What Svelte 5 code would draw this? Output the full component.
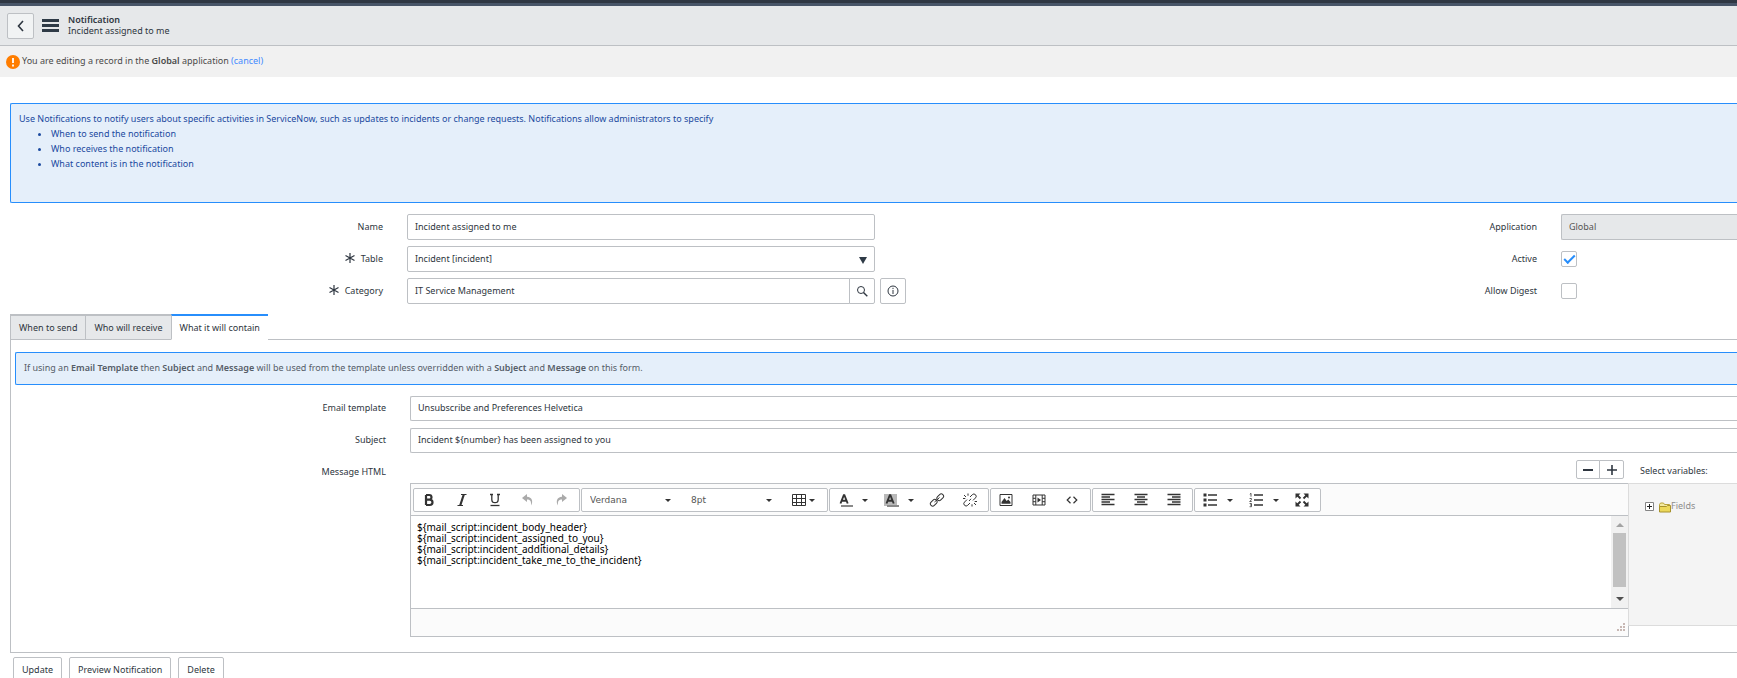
<script lang="ts">
  let name = $state("Incident assigned to me");
  let table = $state("Incident [incident]");
  let category = $state("IT Service Management");
  let active = $state(true);
  let allowDigest = $state(false);
  let template = $state("Unsubscribe and Preferences Helvetica");
  let subject = $state("Incident ${number} has been assigned to you");
  let message = $state(
    [
      "${mail_script:incident_body_header}",
      "${mail_script:incident_assigned_to_you}",
      "${mail_script:incident_additional_details}",
      "${mail_script:incident_take_me_to_the_incident}",
    ].join("\n")
  );

  const tabs = ["When to send", "Who will receive", "What it will contain"];
  let activeTab = $state(2);

  // Toolbar groups that come after the font controls.
  const groups = [
    [
      { icon: "color", label: "Text color", menu: true },
      { icon: "highlight", label: "Background color", menu: true },
      { icon: "link", label: "Insert link" },
      { icon: "unlink", label: "Remove link" },
    ],
    [
      { icon: "image", label: "Insert image" },
      { icon: "video", label: "Insert video" },
      { icon: "code", label: "Source code" },
    ],
    [
      { icon: "left", label: "Align left" },
      { icon: "center", label: "Align center" },
      { icon: "right", label: "Align right" },
    ],
    [
      { icon: "bullets", label: "Bullet list", menu: true },
      { icon: "numbers", label: "Numbered list", menu: true },
      { icon: "full", label: "Fullscreen" },
    ],
  ];
</script>

{#snippet icon(kind: string)}
  <svg class="icon" viewBox="0 0 16 16" width="16" height="16" fill="none" stroke="currentColor" aria-hidden="true">
    {#if kind === "bold"}
      <path d="M5 3v10M5 3h3.200a2.200 2.200 0 0 1 0 4.600H5M5 7.600h3.800a2.600 2.600 0 0 1 0 5.400H5" stroke-width="2.200" />
    {:else if kind === "italic"}
      <path d="M7 2.500h5.500M3.500 13.500H9" stroke-width="1" />
      <path d="M9.800 2.500 6.200 13.500" stroke-width="2.200" />
    {:else if kind === "underline"}
      <path d="M4.800 2v5.500a3.200 3.200 0 0 0 6.400 0V2M3 2.500h3M10 2.500h3" stroke-width="1.300" />
      <path d="M3.500 13.500h9" stroke-width="1.300" />
    {:else if kind === "undo"}
      <path d="M7 2 2 6l5 4V7.500c3 0 4.500 1.500 4 6 2.500-4 1-8.500-4-8.800z" fill="currentColor" stroke="none" />
    {:else if kind === "redo"}
      <path d="M9 2l5 4-5 4V7.500c-3 0-4.500 1.500-4 6-2.500-4-1-8.500 4-8.800z" fill="currentColor" stroke="none" />
    {:else if kind === "table"}
      <path d="M1.500 2.500h13v11h-13zM1.500 6.500h13M1.500 10.500h13M5.500 2.500v11M10.500 2.500v11" />
    {:else if kind === "color" || kind === "highlight"}
      {#if kind === "highlight"}<path d="M1 2h13v12H1z" fill="#b9b9b9" stroke="none" />{/if}
      <path d="m3.500 11.500 3.300-8.300h.6l3.300 8.300M4.800 8.700h4.600" stroke-width="1.900" />
      <path d="M4 14h12" stroke="#8a8a8a" stroke-width="2" />
    {:else if kind === "link"}
      <rect x="7.500" y="3" width="7.500" height="4.600" rx="2.300" transform="rotate(-45 11.200 5.300)" />
      <rect x="1" y="8.500" width="7.500" height="4.600" rx="2.300" transform="rotate(-45 4.700 10.800)" />
      <path d="m5.500 10 5-4.500" />
    {:else if kind === "unlink"}
      <path d="m8 5 2.300-2.300a2.200 2.200 0 0 1 3.200 3.200L11 8.400M8 11l-2.300 2.300a2.200 2.200 0 0 1-3.200-3.200L5 7.600M9 6.800 7 9M6 1.500v2.200M2 3l2 2M1 6.500h2.300M10 14.500v-2.200M14 13l-2-2M15 9.500h-2.300" />
    {:else if kind === "image"}
      <path d="M2 2.500h12v11H2z" />
      <path d="M3.500 11.800V10l3-4 2.200 3 1.600-1.500 2.200 2.500v1.800z" fill="currentColor" stroke="none" />
      <circle cx="11" cy="5.500" r="1" fill="currentColor" stroke="none" />
    {:else if kind === "video"}
      <path d="M2 3h12v10H2zM4.800 3v10M11.200 3v10M2 6.300h2.800M2 9.700h2.800M11.200 6.300H14M11.200 9.700H14" />
      <path d="m6.500 5.500 3.500 2.500-3.500 2.500z" fill="currentColor" stroke="none" />
    {:else if kind === "code"}
      <path d="M6.500 4.800 3.200 8l3.300 3.200M9.500 4.800 12.800 8l-3.300 3.200" stroke-width="1.200" />
    {:else if kind === "left"}
      <path d="M1.500 2.500h13M1.500 5h8.500M1.500 7.500h13M1.500 10h8.500M1.500 12.500h13" stroke-width="1.500" />
    {:else if kind === "center"}
      <path d="M1.500 2.500h13M4 5h8M1.500 7.500h13M4 10h8M1.500 12.500h13" stroke-width="1.500" />
    {:else if kind === "right"}
      <path d="M1.500 2.500h13M6 5h8.500M1.500 7.500h13M6 10h8.500M1.500 12.500h13" stroke-width="1.500" />
    {:else if kind === "bullets"}
      <path d="M6 3h9M6 8h9M6 13h9" stroke-width="1.300" />
      <path d="M1.500 3h3M1.500 8h3M1.500 13h3" stroke-width="3" />
    {:else if kind === "numbers"}
      <path d="M6 3h9M6 8h9M6 13h9" stroke-width="1.300" />
      <path d="M1.800 2.300 3 1.300v3.400M1.600 6.500h1.800v1.300L1.700 9.500h2M1.600 11.500h1.900v3.200H1.600M2 13h1.500" stroke-width=".8" />
    {:else if kind === "full"}
      <path d="M1.500 1.500h5l-5 5zM14.500 1.500v5l-5-5zM1.500 14.500v-5l5 5zM14.500 14.500h-5l5-5z" fill="currentColor" stroke="none" />
      <path d="m3 3 3.500 3.500M13 3 9.500 6.500M3 13l3.500-3.500M13 13 9.500 9.500" stroke-width="1.900" />
    {:else if kind === "back"}
      <path d="M10 3 5.500 8l4.500 5" stroke-width="1.600" />
    {:else if kind === "search"}
      <circle cx="7" cy="7" r="3.500" />
      <path d="m9.500 9.500 3.800 3.800" stroke-width="1.400" />
    {:else if kind === "info"}
      <circle cx="8" cy="8" r="5" />
      <path d="M8 7v4M8 4.800v1.300" />
    {:else if kind === "required"}
      <path d="M8 3v10M3.500 5.500l9 5M12.500 5.500l-9 5" stroke-width="1.200" />
    {:else if kind === "minus"}
      <path d="M3 8h10" stroke-width="2" />
    {:else if kind === "plus"}
      <path d="M3 8h10M8 3v10" stroke-width="1.600" />
    {/if}
  </svg>
{/snippet}

{#snippet tool(kind: string, label: string, menu = false)}
  <button class="tool" class:menu aria-label={label}>
    {@render icon(kind)}
    {#if menu}<i class="caret"></i>{/if}
  </button>
{/snippet}

<div class="topbar"></div>

<header>
  <button class="back" aria-label="Back">{@render icon("back")}</button>
  <button class="burger" aria-label="Form menu"><i></i><i></i><i></i></button>
  <h1><strong>Notification</strong><span>{name}</span></h1>
</header>

<div class="scope">
  <svg viewBox="0 0 14 14" width="14" height="14" aria-hidden="true">
    <circle cx="7" cy="7" r="7" fill="#ff7d00" />
    <path d="M7 3v5M7 9.500v2" stroke="#fff" stroke-width="1.800" />
  </svg>
  <p>You are editing a record in the <strong>Global</strong> application <a href="#cancel">(cancel)</a></p>
</div>

<main>
  <section class="intro">
    <p>Use Notifications to notify users about specific activities in ServiceNow, such as updates to incidents or change requests. Notifications allow administrators to specify</p>
    <ul>
      <li>When to send the notification</li>
      <li>Who receives the notification</li>
      <li>What content is in the notification</li>
    </ul>
  </section>

  <form class="record" onsubmit={(e) => e.preventDefault()}>
    <label for="name">Name</label>
    <div class="field"><input id="name" type="text" bind:value={name} /></div>
    <label for="application">Application</label>
    <input id="application" class="readonly" type="text" value="Global" readonly />

    <label for="table">{@render icon("required")}Table</label>
    <div class="field">
      <div class="picker">
        <select id="table" bind:value={table}>
          <option>Incident [incident]</option>
        </select>
      </div>
    </div>
    <label for="active">Active</label>
    <input id="active" type="checkbox" bind:checked={active} />

    <label for="category">{@render icon("required")}Category</label>
    <div class="field">
      <input id="category" class="joined" type="text" bind:value={category} />
      <button class="lookup" type="button" aria-label="Look up category">{@render icon("search")}</button>
      <button class="info" type="button" aria-label="Preview category">{@render icon("info")}</button>
    </div>
    <label for="digest">Allow Digest</label>
    <input id="digest" type="checkbox" bind:checked={allowDigest} />
  </form>

  <div class="tabs" role="tablist">
    {#each tabs as tab, i}
      <button role="tab" class:active={i === activeTab} aria-selected={i === activeTab} onclick={() => (activeTab = i)}>{tab}</button>
    {/each}
    <span class="rest"></span>
  </div>

  <section class="panel">
    <p class="hint">
      If using an <strong>Email Template</strong> then <strong>Subject</strong> and <strong>Message</strong> will be used from the template unless overridden with a <strong>Subject</strong> and <strong>Message</strong> on this form.
    </p>

    <div class="content">
      <label for="template">Email template</label>
      <input id="template" class="bleed" type="text" bind:value={template} />

      <label for="subject">Subject</label>
      <input id="subject" class="bleed" type="text" bind:value={subject} />

      <label for="message">Message HTML</label>
      <div class="message">
        <div class="compose">
          <div class="resize">
            <button aria-label="Shrink editor">{@render icon("minus")}</button>
            <button aria-label="Grow editor">{@render icon("plus")}</button>
          </div>
          <div class="editor">
            <div class="toolbar">
              <div class="group">
                {@render tool("bold", "Bold")}
                {@render tool("italic", "Italic")}
                {@render tool("underline", "Underline")}
                <button class="tool" aria-label="Undo" disabled>{@render icon("undo")}</button>
                <button class="tool" aria-label="Redo" disabled>{@render icon("redo")}</button>
              </div>
              <div class="group fonts">
                <div class="font">
                  <select aria-label="Font family"><option>Verdana</option></select>
                  <i class="caret"></i>
                </div>
                <div class="font">
                  <select aria-label="Font size"><option>8pt</option></select>
                  <i class="caret"></i>
                </div>
                {@render tool("table", "Table", true)}
              </div>
              {#each groups as group}
                <div class="group">
                  {#each group as item}
                    {@render tool(item.icon, item.label, item.menu)}
                  {/each}
                </div>
              {/each}
            </div>
            <div class="body">
              <textarea id="message" spellcheck="false" bind:value={message}></textarea>
              <div class="scrollbar"><i class="up"></i><i class="thumb"></i><i class="down"></i></div>
            </div>
            <div class="status">
              <svg viewBox="0 0 9 9" width="9" height="9" fill="#c8b8b4" aria-hidden="true">
                <path d="M7 0h2v2H7zM7 3h2v2H7zM4 3h2v2H4zM7 6h2v2H7zM4 6h2v2H4zM1 6h2v2H1z" />
              </svg>
            </div>
          </div>
        </div>
        <aside>
          <h2>Select variables:</h2>
          <div class="tree">
            <button class="expand" aria-label="Expand Fields">
              <svg viewBox="0 0 9 9" width="9" height="9" aria-hidden="true">
                <path d="M.5.5h8v8h-8z" fill="#fff" stroke="#848484" />
                <path d="M2 4.500h5M4.500 2v5" stroke="#222" />
              </svg>
            </button>
            <svg viewBox="0 0 12 11" width="12" height="11" aria-hidden="true">
              <path d="M.5 9.500v-7L1.500 1h3l1 1.500h5v3" fill="#f3eaa0" stroke="#b8a23a" />
              <path d="M.5 10V4.500h7l1-1h3V10z" fill="#ecd85a" stroke="#a8922c" />
            </svg>
            <span>Fields</span>
          </div>
        </aside>
      </div>
    </div>
  </section>

  <footer>
    <button>Update</button>
    <button>Preview Notification</button>
    <button>Delete</button>
  </footer>
</main>

<style>
  :global(body) {
    overflow: hidden;
    background: #fff;
    color: #2e3640;
    font: 9px/15px "Noto Sans", "Open Sans", sans-serif;
  }

  :global(#app *) {
    box-sizing: border-box;
  }

  p,
  h1,
  h2,
  ul {
    margin: 0;
    padding: 0;
    font-size: inherit;
    font-weight: 400;
  }

  button,
  input,
  select,
  textarea {
    margin: 0;
    font: inherit;
    color: inherit;
  }

  button {
    display: flex;
    align-items: center;
    justify-content: center;
    padding: 0;
    border: 1px solid #bdc0c4;
    border-radius: 2px;
    background: #fff;
  }

  strong {
    font-weight: 600;
  }

  .icon {
    display: block;
    flex: none;
  }

  .topbar {
    height: 6px;
    border-bottom: 3px solid #485568;
    background: #2f3743;
  }

  header {
    display: flex;
    align-items: center;
    height: 40px;
    padding: 0 7px;
    border-bottom: 1px solid #bdc0c4;
    background: #e6e8ea;
  }

  .back {
    width: 27px;
    height: 26px;
    background: #f1f3f4;
  }

  .burger {
    flex-direction: column;
    gap: 2px;
    width: 17px;
    margin: 0 9px 0 8px;
    border: 0;
    background: none;
  }

  .burger i {
    width: 17px;
    height: 3px;
    background: #2e3a46;
  }

  h1 {
    padding-bottom: 2px;
    line-height: 11px;
  }

  h1 strong,
  h1 span {
    display: block;
  }

  .scope {
    display: flex;
    align-items: center;
    gap: 2px;
    height: 31px;
    padding: 0 6px;
    background: #f1f1f1;
    color: #4a4a4a;
  }

  .scope p {
    padding-bottom: 2px;
  }

  .scope a {
    color: #428bff;
    text-decoration: none;
  }

  main {
    padding: 26px 0 0 10px;
  }

  .intro {
    height: 100px;
    padding: 7px 8px;
    border: 1px solid #278efc;
    border-right: 0;
    border-radius: 2px 0 0 2px;
    background: #e5effa;
    color: #1b4a9f;
  }

  .intro ul {
    padding-left: 32px;
  }

  .record {
    display: grid;
    grid-template-columns: minmax(0, 397fr) minmax(0, 499fr) minmax(0, 655fr) minmax(0, 176fr);
    row-gap: 6px;
    align-items: center;
    padding: 11px 0 10px;
  }

  label {
    display: flex;
    align-items: center;
    justify-content: flex-end;
    gap: 3px;
    padding: 0 24px 2px 0;
  }

  input[type="text"],
  .picker select {
    width: 100%;
    height: 26px;
    padding: 0 7px 2px;
    border: 1px solid #bdc0c4;
    border-radius: 2px;
    background: #fff;
    outline: 0;
  }

  .field {
    display: flex;
    padding-right: 31px;
  }

  .field .joined {
    flex: 1;
    min-width: 0;
    border-radius: 2px 0 0 2px;
  }

  .field:has(.joined) {
    padding-right: 0;
  }

  .lookup {
    width: 26px;
    margin-left: -1px;
    border-radius: 0 2px 2px 0;
  }

  .info {
    width: 26px;
    margin-left: 5px;
  }

  input.readonly {
    border-right: 0;
    border-radius: 2px 0 0 2px;
    background: #e6e8ea;
    color: #555;
  }

  .picker {
    position: relative;
    flex: 1;
  }

  select {
    appearance: none;
    outline: 0;
  }

  .picker::after {
    content: "";
    position: absolute;
    top: 11px;
    right: 8px;
    border: 4px solid transparent;
    border-top: 7px solid #2e3a46;
    border-bottom: 0;
    pointer-events: none;
  }

  input[type="checkbox"] {
    appearance: none;
    display: grid;
    place-items: center;
    width: 16px;
    height: 16px;
    margin: 0;
    border: 1px solid #bdc0c4;
    border-radius: 2px;
    background: #fff;
  }

  input[type="checkbox"]:checked::before {
    content: "";
    width: 9px;
    height: 4px;
    margin-bottom: 3px;
    border: solid #278efc;
    border-width: 0 0 2px 2px;
    transform: rotate(-45deg);
  }

  .tabs {
    display: flex;
    height: 26px;
  }

  .tabs button {
    padding: 0 8px;
    border: solid #bdc0c4;
    border-width: 2px 0 1px 1px;
    border-radius: 0;
    background: #e6e8ea;
  }

  .tabs .active {
    border-top-color: #278efc;
    border-bottom-color: #fff;
    background: #fff;
  }

  .rest {
    flex: 1;
    border-bottom: 1px solid #bdc0c4;
  }

  .panel {
    padding: 12px 0 15px 4px;
    border: solid #bdc0c4;
    border-width: 0 0 1px 1px;
  }

  .hint {
    padding: 7px 8px 9px;
    border: 1px solid #278efc;
    border-right: 0;
    border-radius: 2px 0 0 2px;
    background: #e5effa;
    color: #555d68;
  }

  .content {
    display: grid;
    grid-template-columns: minmax(0, 395fr) minmax(0, 1327fr);
    row-gap: 7px;
    padding-top: 11px;
  }

  .content label {
    height: 25px;
  }

  input.bleed {
    height: 25px;
    border-right: 0;
    border-radius: 2px 0 0 2px;
  }

  .message {
    display: flex;
  }

  .compose {
    flex: 1;
    min-width: 0;
  }

  .resize {
    display: flex;
    justify-content: flex-end;
    padding-right: 5px;
    margin-bottom: 4px;
  }

  .resize button {
    width: 24px;
    height: 19px;
    border-radius: 2px 0 0 2px;
  }

  .resize button + button {
    margin-left: -1px;
    width: 25px;
    border-radius: 0 2px 2px 0;
  }

  .editor {
    border: 1px solid #bdc0c4;
  }

  .toolbar {
    display: flex;
    gap: 1px;
    padding: 4px 2px 3px;
    border-bottom: 1px solid #bdc0c4;
    background: #fbfbfb;
  }

  .group {
    display: flex;
    height: 24px;
    border: 1px solid #bdc0c4;
    border-radius: 2px;
    background: #fff;
  }

  .tool {
    width: 33px;
    padding: 0 4px 0 0;
    border: 0;
    background: none;
    color: #333;
  }

  .tool.menu {
    justify-content: flex-start;
    gap: 9px;
    width: 46px;
    padding: 0 0 0 7px;
  }

  .fonts .tool.menu {
    gap: 2px;
    width: 43px;
  }

  .tool:disabled {
    color: #aaa;
  }

  .caret {
    border: 3px solid transparent;
    border-top-color: #333;
    border-bottom: 0;
  }

  .font {
    position: relative;
    display: flex;
    align-items: center;
    width: 101px;
  }

  .font select {
    width: 100%;
    height: 22px;
    padding: 0 8px;
    border: 0;
    background: none;
    color: #555;
    font-family: "DejaVu Sans", sans-serif;
  }

  .font .caret {
    position: absolute;
    right: 12px;
    pointer-events: none;
  }

  .body {
    display: flex;
    height: 92px;
  }

  textarea {
    flex: 1;
    padding: 6px;
    border: 0;
    outline: 0;
    overflow: hidden;
    resize: none;
    color: #000;
    font: 10px/11px "Noto Sans", sans-serif;
  }

  .scrollbar {
    display: flex;
    flex-direction: column;
    align-items: center;
    width: 17px;
    padding: 7px 2px;
    background: #f1f1f1;
  }

  .up,
  .down {
    border: 4px solid transparent;
  }

  .up {
    border-top: 0;
    border-bottom-color: #a3a3a3;
  }

  .down {
    margin-top: auto;
    border-bottom: 0;
    border-top-color: #505050;
  }

  .thumb {
    width: 13px;
    height: 54px;
    margin-top: 6px;
    background: #c1c1c1;
  }

  .status {
    display: flex;
    align-items: flex-end;
    justify-content: flex-end;
    height: 28px;
    padding: 4px 3px;
    border-top: 1px solid #bdc0c4;
    background: #fbfbfb;
  }

  aside {
    width: 109px;
    margin-left: -1px;
  }

  h2 {
    height: 23px;
    padding: 3px 0 0 12px;
  }

  .tree {
    display: flex;
    align-items: flex-start;
    height: 143px;
    padding: 14px 16px;
    border: solid #dcdcdc;
    border-width: 1px 0 1px 1px;
    background: #f4f4f4;
    color: #8c8c8c;
  }

  .tree svg {
    flex: none;
    margin-top: 4px;
  }

  .expand {
    margin-right: 5px;
    border: 0;
    border-radius: 0;
    background: none;
  }

  footer {
    display: flex;
    gap: 7px;
    padding: 4px 3px;
  }

  footer button {
    height: 26px;
    padding: 0 8px 2px;
  }
</style>
